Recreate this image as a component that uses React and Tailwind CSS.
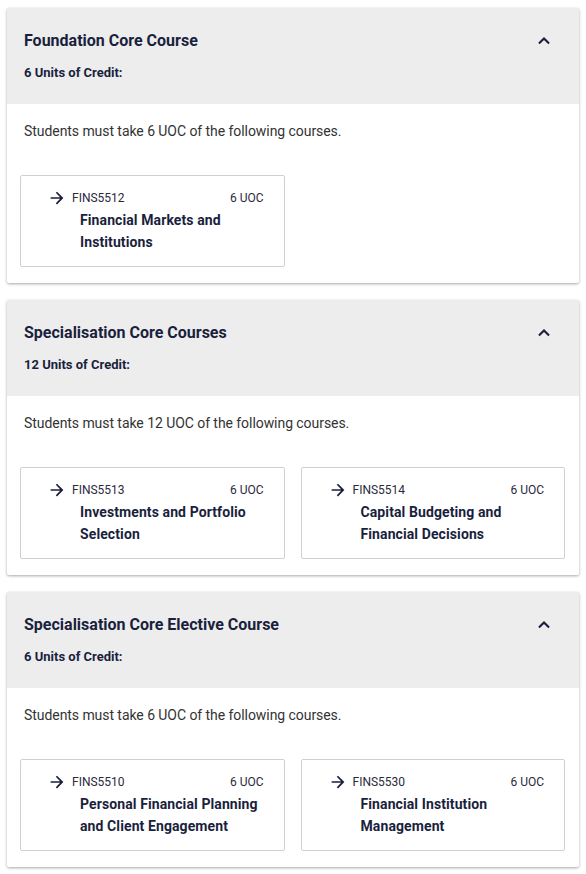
import React from "react";

const sections = [
  {
    title: "Foundation Core Course",
    uoc: 6,
    courses: [{ code: "FINS5512", name: "Financial Markets and Institutions" }],
  },
  {
    title: "Specialisation Core Courses",
    uoc: 12,
    courses: [
      { code: "FINS5513", name: "Investments and Portfolio Selection" },
      { code: "FINS5514", name: "Capital Budgeting and Financial Decisions" },
    ],
  },
  {
    title: "Specialisation Core Elective Course",
    uoc: 6,
    courses: [
      { code: "FINS5510", name: "Personal Financial Planning and Client Engagement" },
      { code: "FINS5530", name: "Financial Institution Management" },
    ],
  },
];

function Arrow() {
  return (
    <svg width="18" height="18" viewBox="0 0 24 24" fill="#1a1f3d" className="-ml-[2px]">
      <path d="M12 3.5l-1.6 1.6 5.75 5.75H3.5v2.3h12.65l-5.75 5.75L12 20.5l8.5-8.5z" />
    </svg>
  );
}

function Chevron() {
  return (
    <svg width="22" height="22" viewBox="0 0 24 24" fill="#1a1f3d">
      <path d="M12 7.6l-6.3 6.3 1.6 1.6 4.7-4.7 4.7 4.7 1.6-1.6z" />
    </svg>
  );
}

function CourseCard({ code, name }) {
  return (
    <div className="border border-[#d0d0d0] rounded-[2px] bg-white pl-[29px] pr-[20px] pt-[13px] pb-[13px] h-[92px]">
      <div className="flex items-center h-[18px]">
        <Arrow />
        <span className="ml-[6px] text-[12px] text-[#2a2a3c]">{code}</span>
        <span className="ml-auto text-[12px] text-[#2a2a3c]">6 UOC</span>
      </div>
      <div className="ml-[30px] mt-[2px] text-[14px] leading-[22px] font-bold text-[#1a1f3d] tracking-[0.1px]">
        {name}
      </div>
    </div>
  );
}

export default function App() {
  return (
    <div
      className="bg-white w-[586px] min-h-[874px] px-[7px] pt-[8px] flex flex-col gap-[17px]"
      style={{ fontFamily: "Roboto, 'Liberation Sans', sans-serif" }}
    >
      {sections.map((s) => (
        <div
          key={s.title}
          className="bg-white shadow-[0_1px_3px_rgba(0,0,0,0.35)] rounded-[2px]"
        >
          <div className="bg-[#ededed] h-[96px] pl-[17px] pr-[24px] pt-[21px]">
            <div className="flex items-center justify-between h-[24px]">
              <h2 className="text-[16px] font-bold text-[#1a1f3d]">{s.title}</h2>
              <Chevron />
            </div>
            <p className="mt-[10px] text-[13px] font-bold text-[#1a1f3d]">
              {s.uoc} Units of Credit:
            </p>
          </div>
          <div className="pl-[13px] pr-[14px] pt-[17px] pb-[16px]">
            <p className="pl-[4px] text-[14px] leading-[20px] text-[#333] tracking-[-0.06px]">
              Students must take {s.uoc} UOC of the following courses.
            </p>
            <div className="mt-[34px] grid grid-cols-2 gap-[16px]">
              {s.courses.map((c) => (
                <CourseCard key={c.code} {...c} />
              ))}
            </div>
          </div>
        </div>
      ))}
    </div>
  );
}
